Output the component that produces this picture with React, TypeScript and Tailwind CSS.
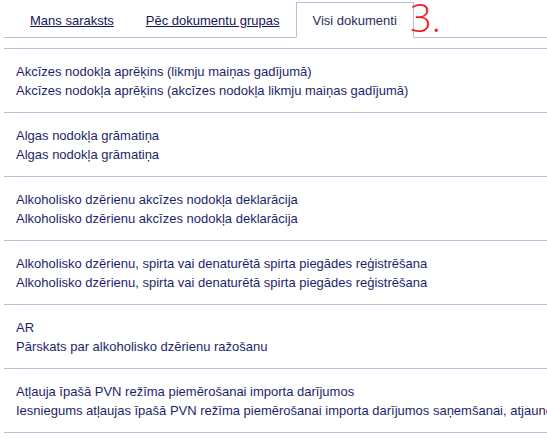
import React from 'react';

interface Doc {
  code: string;
  title: string;
}

const docs: Doc[] = [
  { code: 'Akcīzes nodokļa aprēķins (likmju maiņas gadījumā)', title: 'Akcīzes nodokļa aprēķins (akcīzes nodokļa likmju maiņas gadījumā)' },
  { code: 'Algas nodokļa grāmatiņa', title: 'Algas nodokļa grāmatiņa' },
  { code: 'Alkoholisko dzērienu akcīzes nodokļa deklarācija', title: 'Alkoholisko dzērienu akcīzes nodokļa deklarācija' },
  { code: 'Alkoholisko dzērienu, spirta vai denaturētā spirta piegādes reģistrēšana', title: 'Alkoholisko dzērienu, spirta vai denaturētā spirta piegādes reģistrēšana' },
  { code: 'AR', title: 'Pārskats par alkoholisko dzērienu ražošanu' },
  { code: 'Atļauja īpašā PVN režīma piemērošanai importa darījumos', title: 'Iesniegums atļaujas īpašā PVN režīma piemērošanai importa darījumos saņemšanai, atjaunošanai vai anulēšanai' },
];

const tabs = ['Mans saraksts', 'Pēc dokumentu grupas', 'Visi dokumenti'];

export default function App() {
  const active = 2;

  return (
    <div className="relative w-[547px] h-[439px] overflow-hidden bg-white whitespace-nowrap text-[13px] leading-[19px] font-['Liberation_Sans',Arial,sans-serif]">
      {/* tabs */}
      <div className="ml-[4px] pl-[10px] pt-[2px] flex border-b border-[#b8bfdc] w-[600px]">
        {tabs.map((t, i) =>
          i === active ? (
            <div key={t} className="-mb-px h-[36px] px-[16px] flex items-center border border-[#b8bfdc] border-b-white bg-white text-[#2b2b5e]">
              {t}
            </div>
          ) : (
            <div key={t} className="-mb-px h-[36px] px-[16px] flex items-center">
              <a href="#" className="underline text-[#15155a]">{t}</a>
            </div>
          )
        )}
      </div>

      {/* annotation */}
      <span className="absolute left-[410px] top-[2px] text-[38px] leading-[30px] font-light text-[#ee1c25] font-['Open_Sans',sans-serif]">3.</span>

      {/* list */}
      <div className="mt-[10px] ml-[4px] w-[700px] border-t border-[#b8bfdc]">
        {docs.map(d => (
          <div key={d.code} className="pl-[12px] pt-[13px] pb-[12px] border-b border-[#b8bfdc] text-[#1d1f6c]">
            <div>{d.code}</div>
            <div>{d.title}</div>
          </div>
        ))}
      </div>
    </div>
  );
}
